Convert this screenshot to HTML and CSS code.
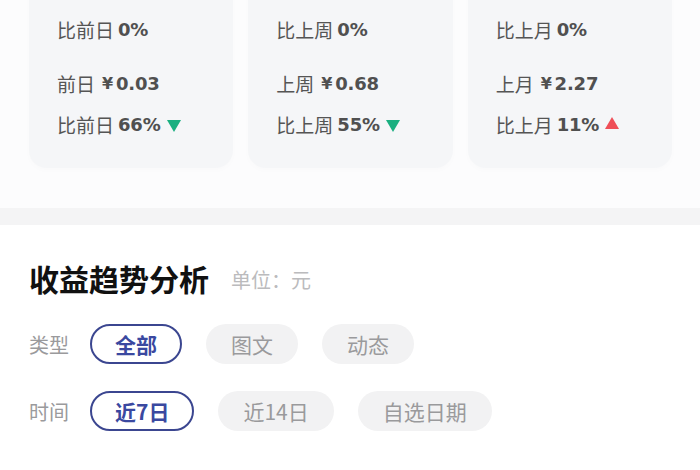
FILE: index.html
```html
<!DOCTYPE html>
<html lang="zh-CN">
<head>
<meta charset="utf-8">
<link rel="stylesheet" href="styles.css">
</head>
<body>
<div class="top">
  <div class="stats">
    <div class="card">
      <div class="line">比前日<b class="num">0%</b></div>
      <div class="line prev">前日<b class="num yen">¥</b><b class="num amt">0.03</b></div>
      <div class="line">比前日<b class="num">66%</b><span class="tri down"></span></div>
    </div>
    <div class="card">
      <div class="line">比上周<b class="num">0%</b></div>
      <div class="line prev">上周<b class="num yen">¥</b><b class="num amt">0.68</b></div>
      <div class="line">比上周<b class="num">55%</b><span class="tri down"></span></div>
    </div>
    <div class="card">
      <div class="line">比上月<b class="num">0%</b></div>
      <div class="line prev">上月<b class="num yen">¥</b><b class="num amt">2.27</b></div>
      <div class="line">比上月<b class="num">11%</b><span class="tri up"></span></div>
    </div>
  </div>
</div>
<div class="band"></div>
<div class="trend">
  <div class="head">
    <h2 class="title">收益趋势分析</h2>
    <span class="unit">单位：元</span>
  </div>
  <div class="row">
    <span class="label">类型</span>
    <span class="chip active">全部</span>
    <span class="chip">图文</span>
    <span class="chip">动态</span>
  </div>
  <div class="row">
    <span class="label">时间</span>
    <span class="chip active">近7日</span>
    <span class="chip">近14日</span>
    <span class="chip">自选日期</span>
  </div>
</div>
</body>
</html>
```

FILE: styles.css
```css
html, body {
  margin: 0;
  padding: 0;
  background: #ffffff;
  font-family: "Noto Sans CJK SC", "Noto Sans", sans-serif;
}

.top {
  background: #fcfcfd;
  height: 208px;
  overflow: hidden;
}

.stats {
  display: flex;
  gap: 15px;
  padding: 0 28px 0 29px;
  margin-top: -20px;
}

.card {
  flex: 1;
  background: #f5f6f8;
  border-radius: 18px;
  padding: 36px 0 31px 28px;
  box-shadow: 0 2px 6px rgba(0, 0, 0, 0.015);
}

.line {
  display: flex;
  align-items: center;
  height: 26px;
  font-size: 19px;
  color: #555555;
}

.line.prev {
  margin-top: 28px;
  margin-bottom: 15px;
}

.num {
  font-family: "DejaVu Sans", "Noto Sans", sans-serif;
  font-size: 18px;
  font-weight: 700;
  color: #505050;
  margin-left: 4px;
  letter-spacing: -0.2px;
}

.num.yen {
  margin-left: 7px;
  font-size: 16px;
}

.num.amt {
  margin-left: 3px;
}

.tri {
  width: 0;
  height: 0;
  margin-left: 6px;
  border-left: 7px solid transparent;
  border-right: 7px solid transparent;
}

.tri.down {
  border-top: 12px solid #1aaf80;
  margin-top: 3px;
}

.tri.up {
  border-bottom: 12px solid #ef4f58;
  margin-top: -2px;
}

.band {
  height: 17px;
  background: #f4f4f5;
}

.trend {
  padding: 34px 29px 0 29px;
}

.head {
  display: flex;
  align-items: center;
  gap: 22px;
  height: 38px;
}

.title {
  margin: 0;
  font-size: 30px;
  font-weight: 700;
  color: #111111;
}

.unit {
  font-size: 20px;
  color: #bbbbbd;
  margin-top: 2px;
}

.row {
  display: flex;
  align-items: center;
  gap: 24px;
  margin-top: 27px;
}

.row + .row {
  margin-top: 27px;
}

.label {
  font-size: 20px;
  color: #9a9a9c;
  width: 41px;
  margin-right: -4px;
}

.chip {
  display: flex;
  align-items: center;
  justify-content: center;
  height: 36px;
  padding: 0 23px;
  border: 2px solid transparent;
  border-radius: 20px;
  background: #f2f2f3;
  color: #9a9a9c;
  font-size: 21px;
}

.chip.active {
  background: #ffffff;
  border-color: #3b4690;
  color: #3a48a0;
  font-weight: 700;
}
```
